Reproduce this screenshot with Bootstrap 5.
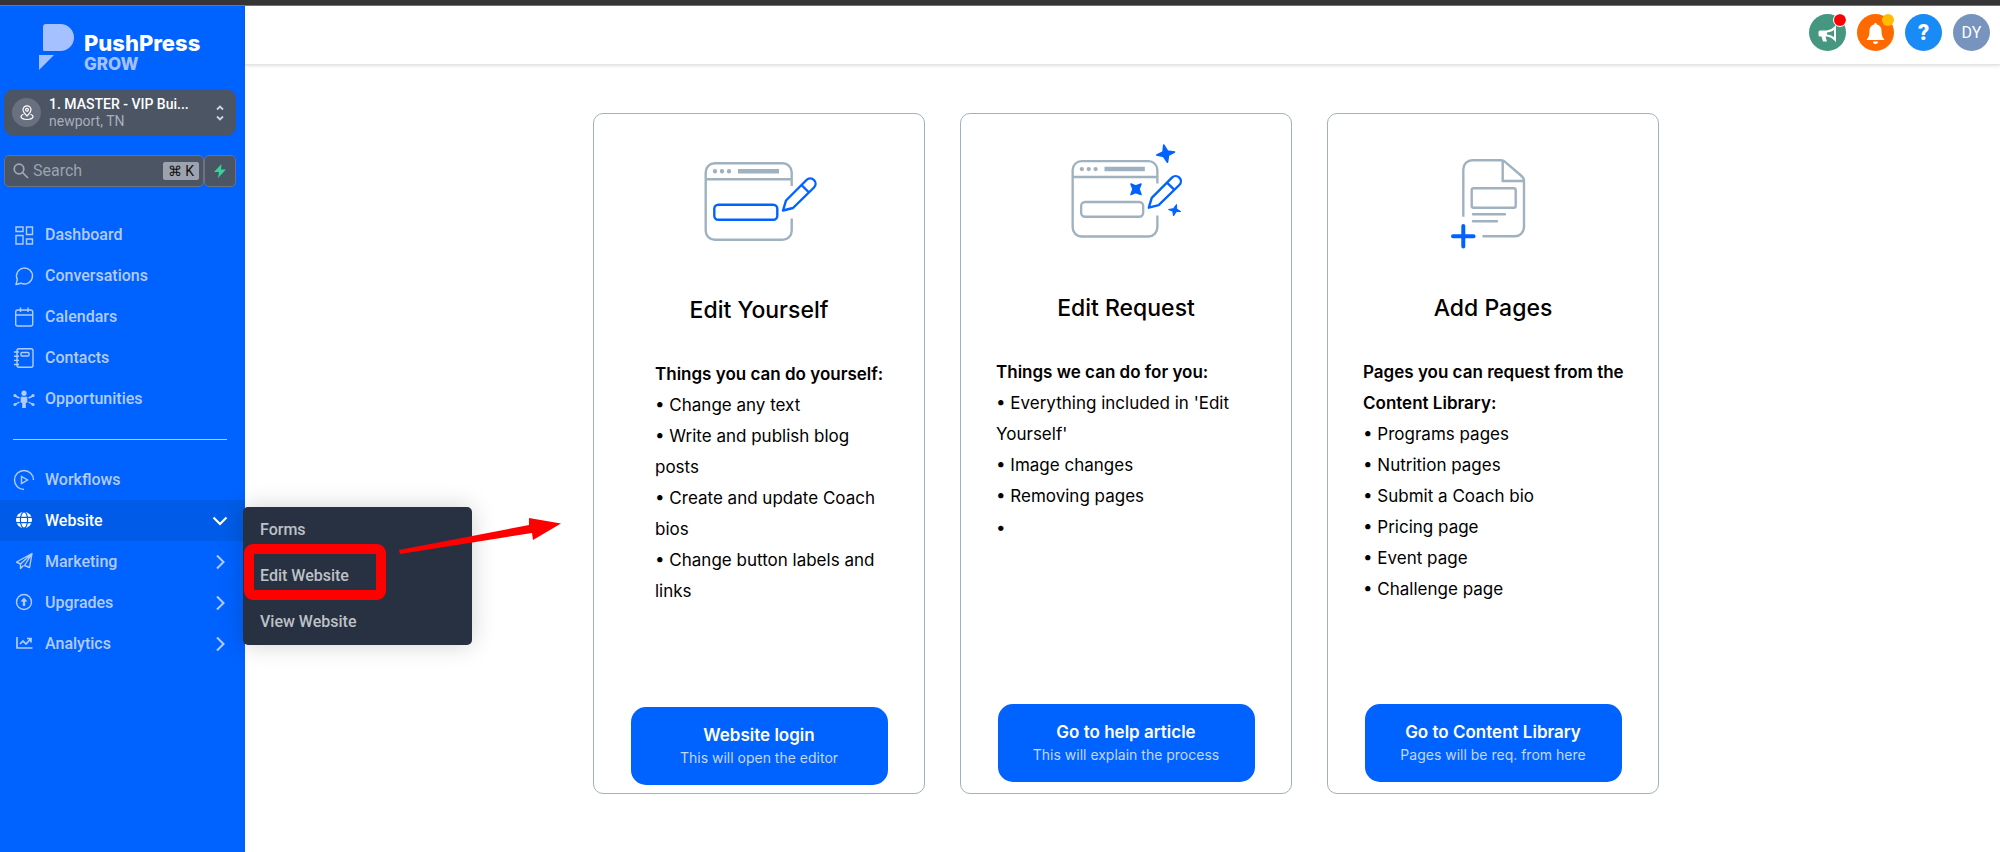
<!DOCTYPE html>
<html lang="en">
<head>
<meta charset="utf-8">
<meta name="viewport" content="width=device-width, initial-scale=1">
<title>PushPress Grow – Edit Website</title>
<link href="https://cdn.jsdelivr.net/npm/bootstrap@5.3.0/dist/css/bootstrap.min.css" rel="stylesheet">
<style>
  :root { --brand: #0062ff; --slate: #4b5563; --line: #a0b1c0; --muted-link: #b3ccff; }
  body { font-family: Roboto, sans-serif; background: #fff; }
  .window-strip { height: 6px; background: #353535; border-bottom: 1px solid #777; }
  .side { width: 245px; background: var(--brand); }
  .brand-link { padding: 17px 0 0 38px; }
  .brand-name { font: 800 22px/25px Inter, sans-serif; color: #fff; }
  .brand-sub { font: 800 17px/17px Inter, sans-serif; color: #a6c1ff; }
  .tools { padding: 0 9px 0 4px; }
  .account { background: var(--slate); border: 0; border-radius: 10px; height: 47px; color: #fff; }
  .account .pin { width: 29px; height: 29px; border-radius: 50%; background: #697080; }
  .account .who { font-size: 14px; line-height: 17px; font-weight: 500; }
  .account .where { font-size: 14px; line-height: 17px; color: #a9afb9; }
  .search-row { margin-top: 19px; }
  .finder { height: 32px; background: var(--slate); border: 1px solid #6b7280; border-radius: 5px; min-width: 0; }
  .finder input { background: none; border: 0; outline: 0; color: #fff; font-size: 16px; min-width: 0; width: 0; }
  .finder input::placeholder { color: #9ca3af; }
  .finder kbd { background: #9ca3af; color: #111; font: 14px/18px Roboto, sans-serif; border-radius: 2px; padding: 0 5px; }
  .bolt { width: 32px; height: 32px; background: var(--slate); border: 1px solid #6b7280; border-radius: 5px; }
  .side-nav { margin-top: 27px; }
  .side-link { height: 41px; padding: 0 17px 0 13px; gap: 10px; color: var(--muted-link); font-size: 16px; font-weight: 500; text-decoration: none; }
  .side-link:hover, .side-link.active { color: #fff; }
  .side-link.active { background: #005ce8; }
  .side-rule { height: 1px; margin: 20px 18px 19px 13px; background: var(--muted-link); }
  .fly { left: 243px; top: 7px; width: 229px; z-index: 5; background: #273142; border-radius: 5px; box-shadow: 0 0 24px rgba(0,0,0,.18); }
  .fly a { height: 46px; padding-left: 17px; color: #bec1c6; font-size: 16px; font-weight: 500; text-decoration: none; }
  .ring { left: 1px; top: 37px; width: 142px; height: 56px; border: 10px solid #f00; border-radius: 9px; pointer-events: none; }
  .arrow { left: 156px; top: 10px; pointer-events: none; }
  .topbar { height: 59px; padding: 8px 10px 0 0; gap: 11px; border-bottom: 1px solid #e4e4e4; box-shadow: 0 1px 3px rgba(0,0,0,.12); }
  .round { width: 37px; height: 37px; border-radius: 50%; border: 0; color: #fff; font-size: 16px; }
  .round.news { background: #469780; }
  .round.bell { background: #ff6a00; }
  .round.help { background: #188bf6; font-size: 22px; font-weight: 900; }
  .round.user { background: #7694be; }
  .dot { width: 12px; height: 12px; border-radius: 50%; right: 0; top: 0; }
  .dot.red { background: #f00; outline: 1px solid #fff; }
  .dot.amber { background: #ffbc00; }
  .choices { gap: 35px; padding: 48px 0 0 7px; font-family: Inter, sans-serif; color: #000; }
  .choice { width: 332px; min-height: 681px; border: 1px solid var(--line); border-radius: 10px; padding: 40px 0 11px; }
  .choice.first { padding: 42px 0 8px; }
  .choice .art { height: 139px; }
  .choice .art svg { overflow: visible; }
  .choice h2 { font-size: 23px; line-height: 30px; font-weight: 500; margin-bottom: 34px; }
  .choice .words { font-size: 17px; line-height: 31px; padding: 0 30px 0 35px; }
  .choice.first .words { padding-left: 61px; }
  .choice .words p { font-weight: 600; }
  .choice .words li::before { content: "• "; }
  .go { width: 257px; height: 78px; border: 0; border-radius: 15px; background: var(--brand); color: #fff; }
  .go b { font-size: 17px; line-height: 24px; font-weight: 600; }
  .go span { font-size: 14px; line-height: 22px; color: #c2d8ff; }
</style>
</head>
<body class="min-vh-100 d-flex flex-column">
<div class="window-strip"></div>
<div class="d-flex flex-grow-1">
  <aside class="side flex-shrink-0">
    <a href="#" class="brand-link d-flex text-decoration-none">
      <svg width="38" height="48" viewBox="0 0 38 48" fill="#a6c1ff"><path d="M8 1h14.500a13.500 13.500 0 0 1 0 27H6a1 1 0 0 1-1-1V4q0-3 3-3zM1 32h15L1 47z"/></svg>
      <span class="ms-2 pt-2"><span class="d-block brand-name">PushPress</span><span class="d-block brand-sub">GROW</span></span>
    </a>
    <div class="tools mt-3">
      <button class="account w-100 d-flex align-items-center text-start px-2" type="button">
        <span class="pin d-flex align-items-center justify-content-center"><svg width="16" height="16" viewBox="0 0 16 16" fill="none" stroke="#fff" stroke-width="1.200"><path d="M8 11C5.500 8.500 4 6.700 4 4.800a4 4 0 0 1 8 0C12 6.700 10.500 8.500 8 11z"/><circle cx="8" cy="4.800" r="1.400"/><path d="M4.500 9.200C.5 10.500 1 14.500 8 14.500s7.500-4 3.500-5.300"/></svg></span>
        <span class="ps-2 flex-grow-1 text-nowrap"><span class="d-block who">1. MASTER - VIP Bui...</span><span class="d-block where">newport, TN</span></span>
        <svg width="16" height="20" viewBox="0 0 16 20" fill="none" stroke="#d1d5db" stroke-width="1.800"><path d="M5 6.500l3-3 3 3M5 13.500l3 3 3-3"/></svg>
      </button>
      <div class="search-row d-flex">
        <label class="finder flex-grow-1 d-flex align-items-center ps-1 pe-1">
          <svg class="flex-shrink-0 ms-1" width="16" height="16" viewBox="0 0 16 16" fill="none" stroke="#a3a9b3" stroke-width="1.700"><circle cx="6" cy="6" r="4.800"/><path d="M9.500 9.500l5.500 5.500"/></svg>
          <input class="flex-grow-1 p-0 ms-1" type="text" placeholder="Search" aria-label="Search">
          <kbd class="text-nowrap flex-shrink-0">⌘ K</kbd>
        </label>
        <button class="bolt flex-shrink-0 p-0 d-flex align-items-center justify-content-center" type="button" aria-label="Quick actions"><svg width="14" height="16" viewBox="0 0 14 16" fill="#34d399"><path d="M8.500 1L1 9h5l-1 6L13 6.500H8z"/></svg></button>
      </div>
    </div>
    <nav class="side-nav">
      <a class="side-link d-flex align-items-center" href="#"><svg width="22" height="22" viewBox="0 0 22 22" fill="none" stroke="currentColor" stroke-width="1.400"><path d="M3 3h7v4.500H3zM13.500 3h6v7.500h-6zM3 11.500h7V20H3zM13.500 15h6v5h-6z"/></svg>Dashboard</a>
      <a class="side-link d-flex align-items-center" href="#"><svg width="22" height="22" viewBox="0 0 22 22" fill="none" stroke="currentColor" stroke-width="1.400"><path d="M3 19.500l1.300-5A8 8 0 1 1 8 18.200z" stroke-linejoin="round"/></svg>Conversations</a>
      <a class="side-link d-flex align-items-center" href="#"><svg width="22" height="22" viewBox="0 0 22 22" fill="none" stroke="currentColor" stroke-width="1.400"><rect x="2.700" y="4" width="17" height="16" rx="2"/><path d="M3 9h16.500M7.500 1.500V6M15 1.500V6"/></svg>Calendars</a>
      <a class="side-link d-flex align-items-center" href="#"><svg width="22" height="22" viewBox="0 0 22 22" fill="none" stroke="currentColor" stroke-width="1.400"><rect x="4" y="1.800" width="16" height="18.500" rx="2"/><rect x="8" y="5.500" width="8" height="3.500" rx="1"/><path d="M1 5h5M1 9.200h5M1 13.400h5M1 17.500h5"/></svg>Contacts</a>
      <a class="side-link d-flex align-items-center" href="#"><svg width="22" height="22" viewBox="0 0 22 22" fill="currentColor"><circle cx="11" cy="5.200" r="2.600"/><path d="M7.700 8.800h6.600v6h-1.500V20H9.200v-5.200H7.700z"/><g fill="none" stroke="currentColor" stroke-width="1.400"><path d="M6.500 10L2 8M6.500 14L2 16.500M15.500 10L20 8M15.500 14l4.500 2.500"/></g><circle cx="2" cy="7.500" r="1.600"/><circle cx="2" cy="16.500" r="1.600"/><circle cx="20" cy="7.500" r="1.600"/><circle cx="20" cy="16.500" r="1.600"/></svg>Opportunities</a>
      <div class="side-rule"></div>
      <a class="side-link d-flex align-items-center" href="#"><svg width="22" height="22" viewBox="0 0 22 22" fill="none" stroke="currentColor" stroke-width="1.400"><path d="M11 20.500A9.500 9.500 0 1 1 20.500 11M8.500 7.500v7l6-3.500z"/></svg>Workflows</a>
      <div class="position-relative">
        <a class="side-link active d-flex align-items-center" href="#"><svg width="22" height="22" viewBox="0 0 22 22"><circle cx="11" cy="10" r="8" fill="#fff"/><g fill="none" stroke="#005ce8" stroke-width="1.200"><ellipse cx="11" cy="10" rx="3.600" ry="8"/><path d="M3 7.300h16M3 12.700h16"/></g></svg><span class="flex-grow-1">Website</span><svg width="16" height="16" viewBox="0 0 16 16" fill="none" stroke="currentColor" stroke-width="2.200"><path d="M1.500 4.500L8 11l6.500-6.500"/></svg></a>
        <div class="fly position-absolute">
          <a class="d-flex align-items-center" href="#">Forms</a>
          <a class="d-flex align-items-center" href="#">Edit Website</a>
          <a class="d-flex align-items-center" href="#">View Website</a>
          <div class="ring position-absolute"></div>
          <svg class="arrow position-absolute" width="164" height="40" viewBox="0 0 164 40" fill="#f00"><path d="M0 33L130 8V1l32 5.500L134 23l-1-7L1 37z"/></svg>
        </div>
      </div>
      <a class="side-link d-flex align-items-center" href="#"><svg width="22" height="22" viewBox="0 0 22 22" fill="none" stroke="currentColor" stroke-width="1.400" stroke-linejoin="round"><path d="M19 2.500L3.500 11l4 2L19 2.500l-2.500 14-5-2L19 2.500M7.500 13v4.500l3-3"/></svg><span class="flex-grow-1">Marketing</span><svg width="16" height="16" viewBox="0 0 16 16" fill="none" stroke="currentColor" stroke-width="2"><path d="M5 1.500L11.500 8 5 14.500"/></svg></a>
      <a class="side-link d-flex align-items-center" href="#"><svg width="22" height="22" viewBox="0 0 22 22" fill="none" stroke="currentColor" stroke-width="1.400"><circle cx="11" cy="10" r="7.500"/><path d="M11 14V8" stroke-width="2.400"/><path d="M7.500 9.500L11 5.500l3.500 4z" fill="currentColor" stroke="none"/></svg><span class="flex-grow-1">Upgrades</span><svg width="16" height="16" viewBox="0 0 16 16" fill="none" stroke="currentColor" stroke-width="2"><path d="M5 1.500L11.500 8 5 14.500"/></svg></a>
      <a class="side-link d-flex align-items-center" href="#"><svg width="22" height="22" viewBox="0 0 22 22" fill="none" stroke="currentColor" stroke-width="1.700"><path d="M4 4v11h15.500M7 11l3-3 3 3 4.500-5M14 5.500h4v4"/></svg><span class="flex-grow-1">Analytics</span><svg width="16" height="16" viewBox="0 0 16 16" fill="none" stroke="currentColor" stroke-width="2"><path d="M5 1.500L11.500 8 5 14.500"/></svg></a>
    </nav>
  </aside>

  <div class="flex-grow-1">
    <header class="topbar d-flex justify-content-end">
      <button class="round news p-0 position-relative" type="button" aria-label="Announcements"><svg width="21" height="21" viewBox="0 0 21 21" fill="#fff"><path d="M3 7.500h7v6H8.500l1.500 5H6l-1.500-5H3a1.500 1.500 0 0 1-1.500-1.500V9A1.500 1.500 0 0 1 3 7.500z"/><path d="M10 8.500q5-.5 8-4v12q-3-3.500-8-4" fill="none" stroke="#fff" stroke-width="2"/></svg><span class="dot red position-absolute"></span></button>
      <button class="round bell p-0 position-relative" type="button" aria-label="Notifications"><svg width="21" height="23" viewBox="0 0 21 23" fill="#fff"><path d="M10.500 1a1.500 1.500 0 0 1 1.400 1.600c3 .7 4.600 3 4.600 6 0 5 1 7 3 9.400H1.500c2-2.400 3-4.400 3-9.400 0-3 1.600-5.300 4.600-6A1.500 1.500 0 0 1 10.500 1zM8 19.500h5a2.500 2.500 0 0 1-5 0z"/></svg><span class="dot amber position-absolute"></span></button>
      <button class="round help p-0" type="button" aria-label="Help">?</button>
      <button class="round user p-0" type="button">DY</button>
    </header>
    <main class="choices d-flex justify-content-center">
      <section class="choice first d-flex flex-column align-items-center">
        <div class="art"><svg width="112" height="88" viewBox="0 0 112 88" fill="none" stroke="#a0b1c0" stroke-width="2.400">
          <g id="browser"><path d="M88.700 30V16.300a9 9 0 0 0-9-9h-68a9 9 0 0 0-9 9v58.400a9 9 0 0 0 9 9h68a9 9 0 0 0 9-9V62.500M2.700 23.300h86"/><path d="M35 15.300h41" stroke-width="4.500"/><path d="M12 15.300h.01M19 15.300h.01M26 15.300h.01" stroke-width="4.400" stroke-linecap="round"/></g>
          <rect x="11.300" y="48.700" width="63" height="15" rx="4" stroke="#0062ff"/>
          <path id="pencil" stroke="#0062ff" stroke-linejoin="round" d="M80 54.500l3-10 20.500-20.500a5 5 0 0 1 7.500 7.500L90 52zM98.500 29l7 7"/></svg></div>
        <h2>Edit Yourself</h2>
        <div class="words w-100"><p class="m-0">Things you can do yourself:</p><ul class="list-unstyled m-0"><li>Change any text</li><li>Write and publish blog posts</li><li>Create and update Coach bios</li><li>Change button labels and links</li></ul></div>
        <button class="go mt-auto" type="button"><b class="d-block">Website login</b><span class="d-block">This will open the editor</span></button>
      </section>
      <section class="choice d-flex flex-column align-items-center">
        <div class="art"><svg width="112" height="88" viewBox="0 0 112 88" fill="none" stroke="#a0b1c0" stroke-width="2.400">
          <g transform="scale(.985)"><use href="#browser"/><rect x="11.300" y="48.700" width="63" height="15" rx="4"/><use href="#pencil"/></g>
          <g fill="#0062ff" stroke="#0062ff" stroke-width="1.600" stroke-linejoin="round">
            <path d="M93.700-9L97.500-3 104.500-2 98.500 1.300 97.500 8.200 93.500 2.500 86.800 1 93-2z"/>
            <path d="M61 30l4.700 2 5.300-2-2 5 2 5.500-5.300-2-4.700 2 2-5.500z"/>
            <path stroke-width="1" d="M106.500 50.500l.2 4.500 4 2.500-4.500.2-2.700 4.300-.7-4.700-4.300-1.800 4.800-.8z"/></g></svg></div>
        <h2>Edit Request</h2>
        <div class="words w-100"><p class="m-0">Things we can do for you:</p><ul class="list-unstyled m-0"><li>Everything included in 'Edit Yourself'</li><li>Image changes</li><li>Removing pages</li><li></li></ul></div>
        <button class="go mt-auto" type="button"><b class="d-block">Go to help article</b><span class="d-block">This will explain the process</span></button>
      </section>
      <section class="choice d-flex flex-column align-items-center">
        <div class="art"><svg width="112" height="96" viewBox="0 0 112 96" fill="none" stroke="#a0b1c0" stroke-width="2.400">
          <path d="M26.300 62.700V15.300a9 9 0 0 1 9-9h28.200q3 0 5.200 2L84 21.500q3 2.500 3 5.500v46.300a9 9 0 0 1-9 9H45.500M65.700 6.500V27H87"/>
          <rect x="34.700" y="34.300" width="44" height="19.400" rx="2"/><path d="M36 60.300h32M36 67.300h24" stroke-linecap="round"/>
          <path d="M26.300 72v20.500M16 82.300h20.600" stroke="#0062ff" stroke-width="4" stroke-linecap="round"/></svg></div>
        <h2>Add Pages</h2>
        <div class="words w-100"><p class="m-0">Pages you can request from the Content Library:</p><ul class="list-unstyled m-0"><li>Programs pages</li><li>Nutrition pages</li><li>Submit a Coach bio</li><li>Pricing page</li><li>Event page</li><li>Challenge page</li></ul></div>
        <button class="go mt-auto" type="button"><b class="d-block">Go to Content Library</b><span class="d-block">Pages will be req. from here</span></button>
      </section>
    </main>
  </div>
</div>
<script src="https://cdn.jsdelivr.net/npm/bootstrap@5.3.0/dist/js/bootstrap.bundle.min.js"></script>
</body>
</html>
